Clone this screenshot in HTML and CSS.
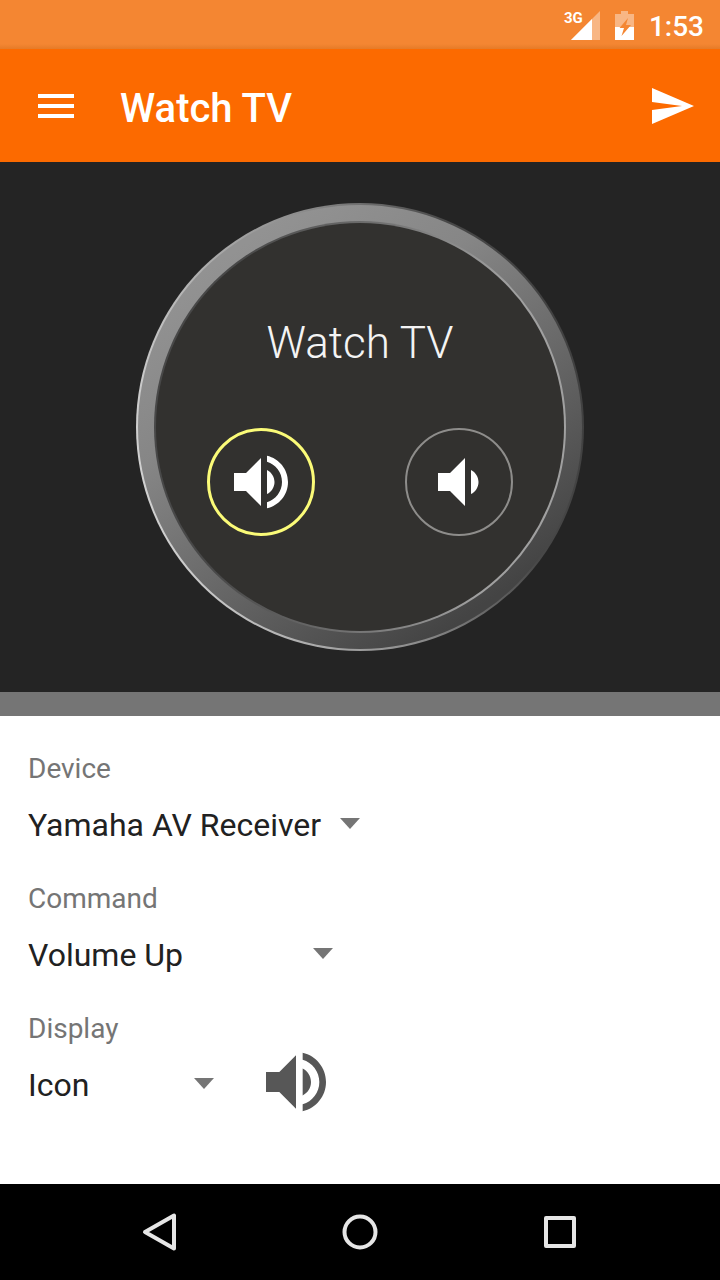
FILE: index.html
```html
<!DOCTYPE html>
<html lang="en">
<head>
  <meta charset="utf-8">
  <meta name="viewport" content="width=device-width, initial-scale=1">
  <title>Watch TV</title>
  <link rel="stylesheet" href="styles.css">
</head>
<body>
  <div class="status-bar">
    <div class="signal">
      <span class="signal-type">3G</span>
      <svg class="signal-icon" viewBox="0 0 29 29" aria-hidden="true">
        <path d="M29 0v29H0z" fill="#fff" fill-opacity=".4"/>
        <path d="M21 8v21H0z" fill="#fff"/>
      </svg>
    </div>
    <svg class="battery-icon" viewBox="0 0 19 29" aria-hidden="true">
      <path d="M6 0h7v3h6v13H0V3h6z" fill="#fff" fill-opacity=".4"/>
      <path d="M0 16h19v13H0z" fill="#fff"/>
      <path d="M13 7L4.500 17H9L6.500 25L16 14h-5z" fill="#f48632"/>
    </svg>
    <time class="clock">1:53</time>
  </div>

  <header class="app-bar">
    <button class="icon-button" type="button" aria-label="Menu">
      <svg class="icon" viewBox="0 0 24 24"><path d="M3 18h18v-2H3v2zm0-5h18v-2H3v2zm0-7v2h18V6H3z"/></svg>
    </button>
    <h1 class="app-title">Watch TV</h1>
    <button class="icon-button" type="button" aria-label="Send">
      <svg class="icon" viewBox="0 0 24 24"><path d="M2.010 21L23 12 2.010 3 2 10l15 2-15 2z"/></svg>
    </button>
  </header>

  <main class="content">
    <section class="preview">
      <div class="dial-edge">
        <div class="dial-ring">
          <div class="dial-lip">
            <div class="dial-face">
              <h2 class="dial-title">Watch TV</h2>
              <div class="dial-actions">
                <button class="dial-button dial-button-selected" type="button" aria-label="Volume Up">
                  <svg class="dial-icon" viewBox="0 0 24 24"><path d="M3 9v6h4l5 5V4L7 9H3zm13.500 3c0-1.770-1.020-3.290-2.500-4.030v8.050c1.480-.730 2.500-2.250 2.500-4.020zM14 3.230v2.060c2.890.860 5 3.540 5 6.710s-2.110 5.850-5 6.710v2.060c4.010-.910 7-4.490 7-8.770s-2.990-7.860-7-8.770z"/></svg>
                </button>
                <button class="dial-button" type="button" aria-label="Volume Down">
                  <svg class="dial-icon" viewBox="0 0 24 24"><path d="M18.500 12c0-1.770-1.020-3.290-2.500-4.030v8.050c1.480-.730 2.500-2.250 2.500-4.020zM5 9v6h4l5 5V4L9 9H5z"/></svg>
                </button>
              </div>
            </div>
          </div>
        </div>
      </div>
    </section>

    <form class="settings">
      <div class="field">
        <label class="field-label" for="device">Device</label>
        <div class="field-row">
          <div class="picker picker-wide">
            <select class="picker-select" id="device"><option>Yamaha AV Receiver</option></select>
          </div>
        </div>
      </div>
      <div class="field">
        <label class="field-label" for="command">Command</label>
        <div class="field-row">
          <div class="picker picker-medium">
            <select class="picker-select" id="command"><option>Volume Up</option><option>Volume Down</option></select>
          </div>
        </div>
      </div>
      <div class="field">
        <label class="field-label" for="display">Display</label>
        <div class="field-row">
          <div class="picker picker-small">
            <select class="picker-select" id="display"><option>Icon</option><option>Text</option></select>
          </div>
          <svg class="display-icon" viewBox="0 0 24 24" role="img" aria-label="Volume up icon"><path d="M3 9v6h4l5 5V4L7 9H3zm13.500 3c0-1.770-1.020-3.290-2.500-4.030v8.050c1.480-.730 2.500-2.250 2.500-4.020zM14 3.230v2.060c2.890.860 5 3.540 5 6.710s-2.110 5.850-5 6.710v2.060c4.010-.910 7-4.490 7-8.770s-2.990-7.860-7-8.770z"/></svg>
        </div>
      </div>
    </form>
  </main>

  <nav class="nav-bar" aria-label="System">
    <button class="nav-button" type="button" aria-label="Back">
      <svg class="nav-icon" viewBox="0 0 48 48"><path d="M38 7.500v33L9 24z"/></svg>
    </button>
    <button class="nav-button" type="button" aria-label="Home">
      <svg class="nav-icon" viewBox="0 0 48 48"><circle cx="24" cy="24" r="15.500"/></svg>
    </button>
    <button class="nav-button" type="button" aria-label="Recent apps">
      <svg class="nav-icon" viewBox="0 0 48 48"><path d="M10 10h28v28H10z"/></svg>
    </button>
  </nav>
</body>
</html>
```

FILE: styles.css
```css
* {
  box-sizing: border-box;
}

body {
  display: flex;
  flex-direction: column;
  min-height: 100vh;
  margin: 0;
  background: #fff;
  color: #212121;
  font-family: Roboto, "Liberation Sans", sans-serif;
}

button {
  padding: 0;
  border: 0;
  background: none;
  cursor: pointer;
}

svg {
  display: block;
  flex: none;
}

.status-bar {
  display: flex;
  align-items: center;
  justify-content: flex-end;
  gap: 15px;
  height: 49px;
  padding: 1px 16px 0 0;
  background: linear-gradient(#f48632 44px, #e57b28);
  color: #fff;
}

.signal {
  position: relative;
}

.signal-type {
  position: absolute;
  top: -3px;
  left: -7px;
  font-size: 15px;
  font-weight: 700;
  line-height: 20px;
}

.signal-icon {
  width: 29px;
  height: 29px;
}

.battery-icon {
  width: 19px;
  height: 29px;
}

.clock {
  padding-top: 4px;
  font-size: 28px;
  font-weight: 500;
  line-height: 32px;
}

.app-bar {
  display: flex;
  align-items: center;
  height: 113px;
  padding: 0 24px 0 32px;
  background: #fc6a00;
  color: #fff;
}

.icon-button {
  flex: none;
  color: inherit;
}

.icon {
  width: 48px;
  height: 48px;
  fill: currentColor;
}

.app-title {
  flex: 1;
  margin: 0 0 0 40px;
  padding-top: 6px;
  font-size: 40px;
  font-weight: 500;
  line-height: 48px;
}

.content {
  flex: 1;
}

.preview {
  display: flex;
  justify-content: center;
  padding: 41px 0;
  border-bottom: 24px solid #757575;
  background: #242424;
}

.dial-edge,
.dial-ring,
.dial-lip,
.dial-face {
  border-radius: 50%;
}

.dial-edge {
  padding: 2px;
  background: linear-gradient(75deg, #e0e0e0, #8c8c8c 50%, #484848 75%, #3c3c3c);
}

.dial-ring {
  padding: 16px;
  background: linear-gradient(145deg, #929292 15%, #868686 35%, #444 85%);
}

.dial-lip {
  padding: 2px;
  background: linear-gradient(95deg, #484848 20%, #707070 50%, #a0a0a0 80%);
}

.dial-face {
  display: flex;
  flex-direction: column;
  align-items: center;
  width: 408px;
  height: 408px;
  padding-top: 92px;
  background: #32312f;
  color: #f4f4f4;
}

.dial-title {
  margin: 0;
  font-size: 44px;
  font-weight: 300;
  line-height: 56px;
}

.dial-actions {
  display: flex;
  gap: 90px;
  margin-top: 57px;
}

.dial-button {
  display: grid;
  place-items: center;
  width: 108px;
  height: 108px;
  border: 2px solid #8e8d8b;
  border-radius: 50%;
}

.dial-button-selected {
  border: 3px solid #fbfb78;
}

.dial-icon {
  width: 72px;
  height: 72px;
  fill: #fff;
}

.settings {
  display: flex;
  flex-direction: column;
  gap: 33px;
  padding: 37px 28px;
}

.field {
  display: flex;
  flex-direction: column;
  gap: 15px;
}

.field-label {
  color: #757575;
  font-size: 28px;
  line-height: 32px;
}

.field-row {
  display: flex;
  align-items: center;
  gap: 24px;
  height: 50px;
}

.picker {
  position: relative;
}

.picker::after {
  content: "";
  position: absolute;
  top: 18px;
  right: 18px;
  border-top: 11px solid #757575;
  border-right: 10px solid transparent;
  border-left: 10px solid transparent;
  pointer-events: none;
}

.picker-wide {
  width: 350px;
}

.picker-medium {
  width: 323px;
}

.picker-small {
  width: 204px;
}

.picker-select {
  display: block;
  width: 100%;
  height: 50px;
  padding: 0;
  border: 0;
  appearance: none;
  background: transparent;
  color: inherit;
  font: 32px Roboto, "Liberation Sans", sans-serif;
}

.display-icon {
  width: 80px;
  height: 80px;
  margin-bottom: 6px;
  fill: #575757;
}

.nav-bar {
  display: flex;
  justify-content: center;
  height: 96px;
  background: #000;
}

.nav-button {
  display: grid;
  place-items: center;
  width: 200px;
}

.nav-icon {
  width: 48px;
  height: 48px;
  fill: none;
  stroke: #e6e6e6;
  stroke-linejoin: round;
  stroke-width: 4px;
}
```
